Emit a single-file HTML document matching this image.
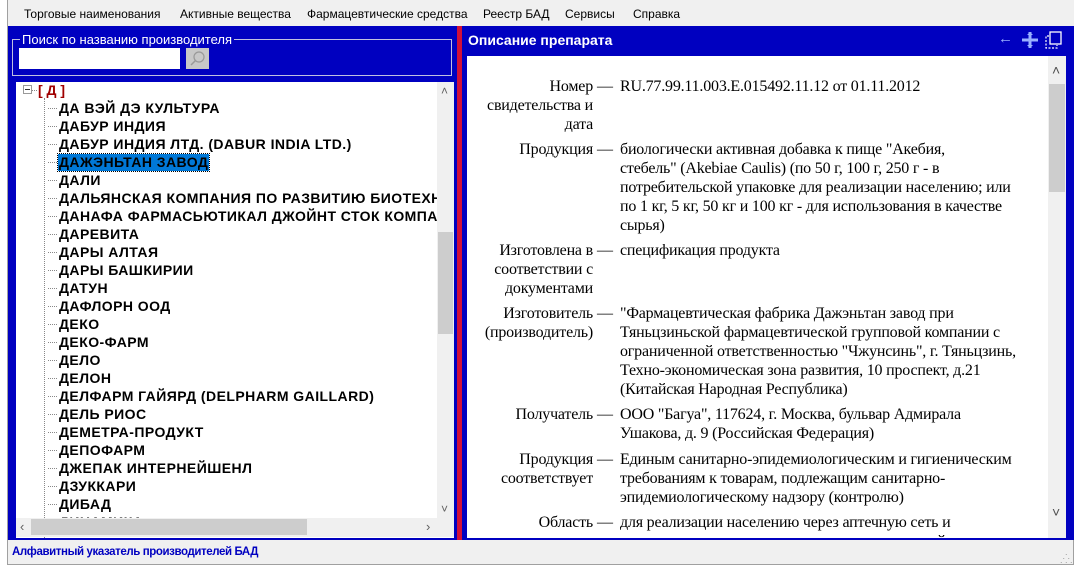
<!DOCTYPE html>
<html><head><meta charset="utf-8"><style>
*{margin:0;padding:0;box-sizing:border-box}
body{width:1082px;height:570px;background:#fff;position:relative;overflow:hidden;font-family:"Liberation Sans",Arial,sans-serif}
.a{position:absolute}
#frame{left:7px;top:0;width:1067px;height:565px;background:#f0f0f0;border-left:1px solid #a0a0a0;border-right:1px solid #a0a0a0;border-bottom:1px solid #a0a0a0}
#menu{left:8px;top:0;width:1066px;height:26px;background:#f0f0f0;font-size:12px;color:#000}
#menu span{position:absolute;top:7px}
#blue{left:8px;top:26px;width:1066px;height:514px;background:#0000c0}
#red{left:457px;top:26px;width:5px;height:514px;background:#d0103a}
#grp{left:12px;top:39px;width:440px;height:37px;border:1px solid #c0c0e0}
#grpl{left:20px;top:32px;font-size:13px;color:#fff;background:#0000c0;padding:0 2px}
#inp{left:19px;top:48px;width:161px;height:21px;background:#fff}
#btn{left:186px;top:48px;width:23px;height:21px;background:#c8c8c8}
#tree{left:16px;top:82px;width:438px;height:456px;background:#fff;overflow:hidden}
.it{position:absolute;left:42px;font-size:14px;letter-spacing:0.45px;font-weight:bold;color:#000;white-space:nowrap;line-height:17px;height:17px;padding:0 1px}
.br{position:absolute;left:32px;width:9px;border-top:1px dotted #888}
#vs{left:437px;top:82px;width:17px;height:436px;background:#f0f0f0}
#hs{left:16px;top:518px;width:421px;height:19px;background:#f0f0f0}
#right{left:467px;top:56px;width:599px;height:482px;background:#fff;overflow:hidden}
.row{position:absolute;left:0;width:599px;font-family:"Liberation Serif","Times New Roman",serif;font-size:16px;letter-spacing:-0.2px;line-height:19px;color:#000}
.lb{position:absolute;left:0;width:126px;text-align:right;white-space:nowrap}
.da{position:absolute;left:130px}
.vl{position:absolute;left:153px;white-space:nowrap}
#rs{left:1048px;top:56px;width:18px;height:482px;background:#f0f0f0}
#status{left:8px;top:541px;width:1066px;height:23px;font-size:11.5px;color:#0000c0;font-weight:bold;padding:5px 0 0 4px;letter-spacing:-0.4px}
</style></head><body>
<div class="a" id="frame"></div>
<div class="a" id="menu">
<span style="left:16px">Торговые наименования</span>
<span style="left:172px">Активные вещества</span>
<span style="left:299px">Фармацевтические средства</span>
<span style="left:475px">Реестр БАД</span>
<span style="left:557px">Сервисы</span>
<span style="left:625px">Справка</span>
</div>
<div class="a" id="blue"></div>
<div class="a" id="red"></div>
<div class="a" id="grp"></div>
<div class="a" id="grpl">Поиск по названию производителя</div>
<div class="a" id="inp"></div>
<div class="a" id="btn"><svg width="23" height="21"><circle cx="13" cy="9" r="5" fill="none" stroke="#999" stroke-width="1.2"/><line x1="9.5" y1="12.5" x2="5" y2="17" stroke="#999" stroke-width="1.5"/></svg></div>
<div class="a" id="tree">
<div class="a" style="left:7px;top:3px;width:9px;height:9px;border:1px solid #999;background:#fff"></div>
<div class="a" style="left:9px;top:7px;width:5px;border-top:1px solid #333"></div>
<div class="a" style="left:16px;top:8px;width:5px;border-top:1px dotted #888"></div>
<div class="a" style="left:22px;top:0;font-size:14px;font-weight:bold;color:#a00000">[ Д ]</div>
<div class="a" style="left:28px;top:16px;height:440px;border-left:1px dotted #888"></div>
</div>
<div class="a" id="trees" style="left:16px;top:82px;width:421px;height:436px;overflow:hidden">
<div class="br" style="top:26px"></div><div class="it" style="top:18px">ДА ВЭЙ ДЭ КУЛЬТУРА</div>
<div class="br" style="top:44px"></div><div class="it" style="top:36px">ДАБУР ИНДИЯ</div>
<div class="br" style="top:62px"></div><div class="it" style="top:54px">ДАБУР ИНДИЯ ЛТД. (DABUR INDIA LTD.)</div>
<div class="br" style="top:80px"></div><div class="it" style="top:72px;background:#0078d7;outline:1px dotted #000">ДАЖЭНЬТАН ЗАВОД</div>
<div class="br" style="top:98px"></div><div class="it" style="top:90px">ДАЛИ</div>
<div class="br" style="top:116px"></div><div class="it" style="top:108px">ДАЛЬЯНСКАЯ КОМПАНИЯ ПО РАЗВИТИЮ БИОТЕХНОЛОГИЙ</div>
<div class="br" style="top:134px"></div><div class="it" style="top:126px">ДАНАФА ФАРМАСЬЮТИКАЛ ДЖОЙНТ СТОК КОМПАНИ</div>
<div class="br" style="top:152px"></div><div class="it" style="top:144px">ДАРЕВИТА</div>
<div class="br" style="top:170px"></div><div class="it" style="top:162px">ДАРЫ АЛТАЯ</div>
<div class="br" style="top:188px"></div><div class="it" style="top:180px">ДАРЫ БАШКИРИИ</div>
<div class="br" style="top:206px"></div><div class="it" style="top:198px">ДАТУН</div>
<div class="br" style="top:224px"></div><div class="it" style="top:216px">ДАФЛОРН ООД</div>
<div class="br" style="top:242px"></div><div class="it" style="top:234px">ДЕКО</div>
<div class="br" style="top:260px"></div><div class="it" style="top:252px">ДЕКО-ФАРМ</div>
<div class="br" style="top:278px"></div><div class="it" style="top:270px">ДЕЛО</div>
<div class="br" style="top:296px"></div><div class="it" style="top:288px">ДЕЛОН</div>
<div class="br" style="top:314px"></div><div class="it" style="top:306px">ДЕЛФАРМ ГАЙЯРД (DELPHARM GAILLARD)</div>
<div class="br" style="top:332px"></div><div class="it" style="top:324px">ДЕЛЬ РИОС</div>
<div class="br" style="top:350px"></div><div class="it" style="top:342px">ДЕМЕТРА-ПРОДУКТ</div>
<div class="br" style="top:368px"></div><div class="it" style="top:360px">ДЕПОФАРМ</div>
<div class="br" style="top:386px"></div><div class="it" style="top:378px">ДЖЕПАК ИНТЕРНЕЙШЕНЛ</div>
<div class="br" style="top:404px"></div><div class="it" style="top:396px">ДЗУККАРИ</div>
<div class="br" style="top:422px"></div><div class="it" style="top:414px">ДИБАД</div>
<div class="it" style="top:432px">ДИНАМИКА</div>
</div>
<div class="a" id="vs">
<div class="a" style="left:4px;top:2px;font-size:12px;color:#606060">&#708;</div>
<div class="a" style="left:1px;top:150px;width:15px;height:102px;background:#cdcdcd"></div>
<div class="a" style="left:4px;top:420px;font-size:12px;color:#606060">&#709;</div>
</div>
<div class="a" id="hs">
<div class="a" style="left:4px;top:1px;font-size:13px;color:#606060">‹</div>
<div class="a" style="left:15px;top:1px;width:276px;height:16px;background:#cdcdcd"></div>
<div class="a" style="left:410px;top:1px;font-size:13px;color:#606060">›</div>
</div>
<div class="a" style="left:437px;top:518px;width:17px;height:19px;background:#f0f0f0"></div>

<div class="a" style="left:468px;top:32px;font-size:14px;font-weight:bold;color:#fff">Описание препарата</div>
<div class="a" style="left:998px;top:30px;font-size:15px;color:#9ab0ff">←</div>
<svg class="a" style="left:1020px;top:31px" width="20" height="18"><path d="M10 1v16M2 9h16" stroke="#9ab0ff" stroke-width="3"/><path d="M10 1l-3 3h6zM10 17l-3-3h6z" fill="#9ab0ff"/></svg>
<svg class="a" style="left:1045px;top:31px" width="18" height="18"><rect x="5" y="1" width="11" height="12" fill="none" stroke="#fff" stroke-width="1.3"/><path d="M4 5H1v12h11v-3" fill="none" stroke="#fff" stroke-width="1.2" stroke-dasharray="2 1.5"/></svg>

<div class="a" id="right">
<div class="row" style="top:21px"><div class="lb">Номер<br>свидетельства и<br>дата</div><div class="da">—</div><div class="vl">RU.77.99.11.003.E.015492.11.12 от 01.11.2012</div></div>
<div class="row" style="top:84px"><div class="lb">Продукция</div><div class="da">—</div><div class="vl">биологически активная добавка к пище "Акебия,<br>стебель" (Akebiae Caulis) (по 50 г, 100 г, 250 г - в<br>потребительской упаковке для реализации населению; или<br>по 1 кг, 5 кг, 50 кг и 100 кг - для использования в качестве<br>сырья)</div></div>
<div class="row" style="top:185px"><div class="lb">Изготовлена в<br>соответствии с<br>документами</div><div class="da">—</div><div class="vl">спецификация продукта</div></div>
<div class="row" style="top:248px"><div class="lb">Изготовитель<br>(производитель)</div><div class="da">—</div><div class="vl">"Фармацевтическая фабрика Дажэньтан завод при<br>Тяньцзиньской фармацевтической групповой компании с<br>ограниченной ответственностью "Чжунсинь", г. Тяньцзинь,<br>Техно-экономическая зона развития, 10 проспект, д.21<br>(Китайская Народная Республика)</div></div>
<div class="row" style="top:349px"><div class="lb">Получатель</div><div class="da">—</div><div class="vl">ООО "Багуа", 117624, г. Москва, бульвар Адмирала<br>Ушакова, д. 9 (Российская Федерация)</div></div>
<div class="row" style="top:394px"><div class="lb">Продукция<br>соответствует</div><div class="da">—</div><div class="vl">Единым санитарно-эпидемиологическим и гигиеническим<br>требованиям к товарам, подлежащим санитарно-<br>эпидемиологическому надзору (контролю)</div></div>
<div class="row" style="top:457px"><div class="lb">Область</div><div class="da">—</div><div class="vl">для реализации населению через аптечную сеть и<br>специализированные магазины, отделы торговой</div></div>
</div>
<div class="a" id="rs">
<div class="a" style="left:4px;top:6px;font-size:14px;color:#505050">&#708;</div>
<div class="a" style="left:1px;top:28px;width:16px;height:108px;background:#cdcdcd"></div>
<div class="a" style="left:4px;top:448px;font-size:14px;color:#505050">&#709;</div>
</div>
<div class="a" id="status">Алфавитный указатель производителей БАД</div>
<div class="a" style="left:1060px;top:550px;font-size:9px;color:#999;line-height:4px">&nbsp;&nbsp;.<br>&nbsp;. .<br>. . .</div>
</body></html>
